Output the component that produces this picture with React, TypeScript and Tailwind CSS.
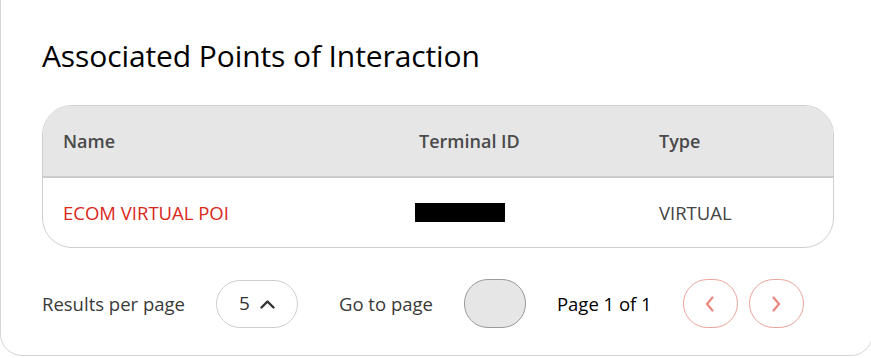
import React from "react";

const font = { fontFamily: '"Open Sans", "Noto Sans", sans-serif' };

function ChevronUp() {
  return (
    <svg width="15" height="10" viewBox="0 0 15 10" fill="none">
      <path d="M1.5 8.5 L7.5 2.5 L13.5 8.5" stroke="#333" strokeWidth="2.4" strokeLinecap="round" strokeLinejoin="round" />
    </svg>
  );
}

function ChevronSide({ dir }: { dir: "left" | "right" }) {
  return (
    <svg width="10" height="16" viewBox="0 0 10 16" fill="none">
      {dir === "left" ? (
        <path d="M7.5 1.5 L2 8 L7.5 14.5" stroke="#e8897e" strokeWidth="2.2" strokeLinecap="round" strokeLinejoin="round" />
      ) : (
        <path d="M2.5 1.5 L8 8 L2.5 14.5" stroke="#e8897e" strokeWidth="2.2" strokeLinecap="round" strokeLinejoin="round" />
      )}
    </svg>
  );
}

export default function App() {
  return (
    <div className="w-[871px] h-[358px] bg-white overflow-hidden" style={font}>
      <div className="mt-[-30px] w-[873px] h-[386px] rounded-[22px] border border-[#d4d4d4] bg-white pl-[41px] pt-[67px]">
        <h2 className="text-[30px] leading-[36px] font-medium tracking-[-0.1px] text-black">
          Associated Points of Interaction
        </h2>
        <div className="mt-[31px] w-[792px] rounded-[30px] border border-[#cfcfcf] overflow-hidden">
          <div className="h-[72px] bg-[#e6e6e6] border-b-2 border-[#cccccc] grid grid-cols-[356px_240px_1fr] pl-[20px] items-center text-[18px] font-semibold text-[#4a4a4a]">
            <div>Name</div>
            <div>Terminal ID</div>
            <div>Type</div>
          </div>
          <div className="h-[69px] grid grid-cols-[356px_240px_1fr] pl-[20px] items-center text-[18.5px]">
            <div className="text-[#d9281c]">ECOM VIRTUAL POI</div>
            <div>
              <div className="ml-[-4px] w-[90px] h-[19px] bg-black" />
            </div>
            <div className="text-[#444]">VIRTUAL</div>
          </div>
        </div>
        <div className="mt-[31px] flex items-center h-[49px] text-[18.5px]">
          <span className="text-[#3a3a3a]">Results per page</span>
          <div className="ml-[31px] w-[82px] h-[48px] rounded-full border border-[#cfcfcf] flex items-center justify-center gap-[10px]">
            <span className="text-[#333] text-[19px]">5</span>
            <ChevronUp />
          </div>
          <span className="ml-[41px] text-[#3a3a3a]">Go to page</span>
          <div className="ml-[31px] w-[62px] h-[49px] rounded-[24px] border border-[#9a9a9a] bg-[#e6e6e6]" />
          <span className="ml-[31px] text-black">Page 1 of 1</span>
          <button className="ml-[31px] w-[55px] h-[49px] rounded-full border border-[#eba39b] flex items-center justify-center">
            <ChevronSide dir="left" />
          </button>
          <button className="ml-[11px] w-[55px] h-[49px] rounded-full border border-[#eba39b] flex items-center justify-center">
            <ChevronSide dir="right" />
          </button>
        </div>
      </div>
    </div>
  );
}
